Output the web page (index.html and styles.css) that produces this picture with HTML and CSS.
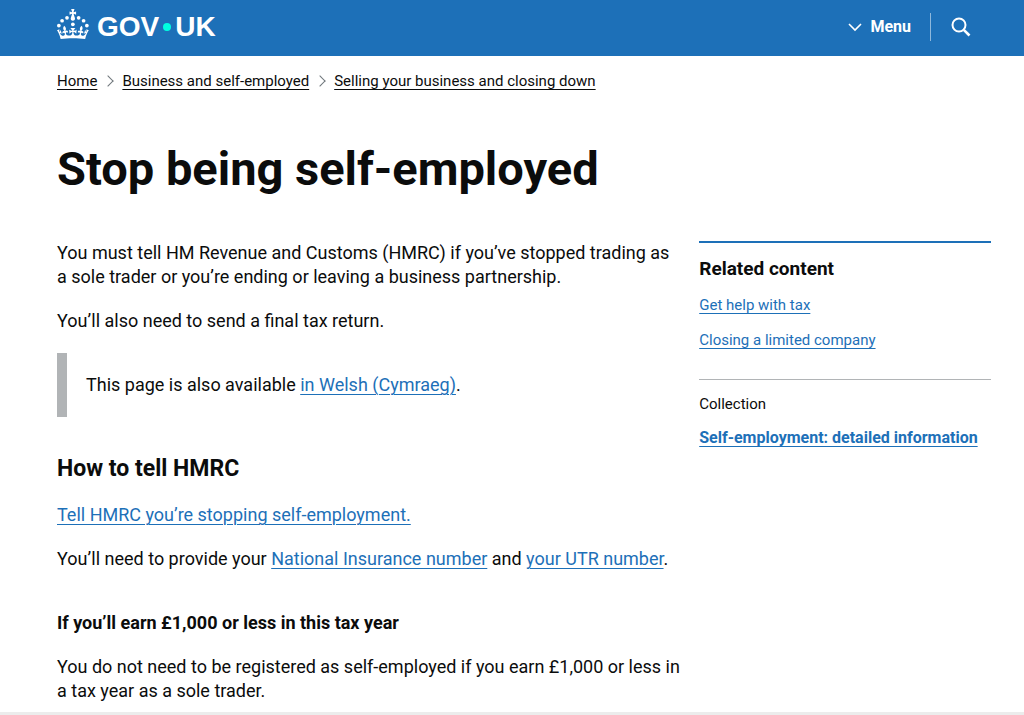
FILE: index.html
```
<!DOCTYPE html>
<html lang="en">
<head>
  <meta charset="UTF-8" />
  <meta name="viewport" content="width=device-width, initial-scale=1.0" />
  <title>Stop being self-employed - GOV.UK</title>
  <link rel="stylesheet" href="styles.css">
</head>
<body>

  <header class="header">
    <div class="container header-row">
      <a class="logo" href="#" aria-label="GOV.UK">
        <svg class="crown" viewBox="0 0 64 60" width="32" height="30" fill="currentColor" aria-hidden="true">
          <circle cx="20" cy="17.6" r="3.7"/>
          <circle cx="10.2" cy="23.5" r="3.7"/>
          <circle cx="3.7" cy="33.2" r="3.7"/>
          <circle cx="31.7" cy="30.6" r="3.7"/>
          <circle cx="43.3" cy="17.6" r="3.7"/>
          <circle cx="53.2" cy="23.5" r="3.7"/>
          <circle cx="59.7" cy="33.2" r="3.7"/>
          <path d="M33.1,9.8c.2-.1.3-.3.5-.5l4.6,2.4v-6.8l-4.6,1.5c-.1-.2-.3-.3-.5-.5l1.9-5.9h-6.7l1.9,5.9c-.2.1-.3.3-.5.5l-4.6-1.5v6.8l4.6-2.4c.1.2.3.3.5.5l-2.6,8c-.9,2.8,1.2,5.7,4.1,5.7h0c3,0,5.1-2.9,4.1-5.7l-2.6-8ZM37,37.9s-3.4,3.8-4.1,6.1c2.2,0,4.2-.5,6.4-2.8l-.7,8.5c-2-2.8-4.4-4.1-5.7-3.8.1,3.1.5,6.7,5.8,7.2,3.7.3,6.7-1.5,7-3.8.4-2.6-2-4.3-3.7-1.6-1.4-4.5,2.4-6.1,4.9-3.2-1.9-4.5-1.8-7.7,2.4-10.9,3,4,2.6,7.3-1.2,11.1,2.4-1.3,6.2,0,4,4.6-1.2-2.8-3.7-2.2-4.2.2-.3,1.7.7,3.7,3,4.2,1.9.3,4.7-.9,7-5.9-1.3,0-2.4.7-3.9,1.7l2.4-8c.6,2.3,1.4,3.7,2.2,4.5.6-1.6.5-2.8,0-5.3l5,1.8c-2.6,3.6-5.2,8.7-7.3,17.5-7.4-1.1-15.7-1.7-24.5-1.7h0c-8.8,0-17.1.6-24.5,1.7-2.1-8.9-4.7-13.9-7.3-17.5l5-1.8c-.5,2.5-.6,3.7,0,5.3.8-.8,1.6-2.3,2.2-4.5l2.4,8c-1.5-1-2.6-1.7-3.9-1.7,2.3,5,5.2,6.2,7,5.9,2.3-.4,3.3-2.4,3-4.2-.5-2.4-3-3.1-4.2-.2-2.2-4.6,1.6-6,4-4.6-3.7-3.7-4.2-7.1-1.2-11.1,4.2,3.2,4.3,6.4,2.4,10.9,2.5-2.8,6.3-1.3,4.9,3.2-1.8-2.7-4.1-1-3.7,1.6.3,2.3,3.3,4.1,7,3.8,5.4-.5,5.7-4.2,5.8-7.2-1.3-.2-3.7,1-5.7,3.8l-.7-8.5c2.2,2.3,4.2,2.7,6.4,2.8-.7-2.3-4.1-6.1-4.1-6.1h10.6Z"/>
        </svg>
        <span class="logo-text">GOV<span class="logo-dot"></span>UK</span>
      </a>
      <div class="header-actions">
        <button class="menu-button" type="button">
          <svg width="14" height="9" viewBox="0 0 14 9" fill="none" stroke="currentColor" stroke-width="1.6" aria-hidden="true">
            <path d="M1 1l6 6 6-6"/>
          </svg>
          Menu
        </button>
        <button class="search-button" type="button" aria-label="Search GOV.UK">
          <svg width="20" height="20" viewBox="0 0 20 20" fill="none" stroke="currentColor" aria-hidden="true">
            <circle cx="8" cy="8" r="6.5" stroke-width="2"/>
            <path d="M12.8 12.8l5.7 5.7" stroke-width="2.6"/>
          </svg>
        </button>
      </div>
    </div>
  </header>

  <div class="container page">
    <nav aria-label="Breadcrumb">
      <ol class="breadcrumbs">
        <li><a href="#">Home</a></li>
        <li><a href="#">Business and self-employed</a></li>
        <li><a href="#">Selling your business and closing down</a></li>
      </ol>
    </nav>

    <h1>Stop being self-employed</h1>

    <div class="columns">
      <main class="content">
        <p>You must tell HM Revenue and Customs (HMRC) if you’ve stopped trading as a sole trader or you’re ending or leaving a business partnership.</p>
        <p>You’ll also need to send a final tax return.</p>
        <div class="inset">
          <p>This page is also available <a href="#">in Welsh (Cymraeg)</a>.</p>
        </div>
        <h2>How to tell HMRC</h2>
        <p><a href="#">Tell HMRC you’re stopping self-employment.</a></p>
        <p>You’ll need to provide your <a href="#">National Insurance number</a> and <a href="#">your UTR number</a>.</p>
        <h3>If you’ll earn £1,000 or less in this tax year</h3>
        <p>You do not need to be registered as self-employed if you earn £1,000 or less in a tax year as a sole trader.</p>
      </main>

      <aside class="related">
        <h2>Related content</h2>
        <ul>
          <li><a href="#">Get help with tax</a></li>
          <li><a href="#">Closing a limited company</a></li>
        </ul>
        <div class="collection">
          <h3>Collection</h3>
          <a href="#">Self-employment: detailed information</a>
        </div>
      </aside>
    </div>
  </div>

  <div class="bottom-bar"></div>

</body>
</html>
```
FILE: styles.css
```
* {
  box-sizing: border-box;
}

body {
  margin: 0;
  height: 100vh;
  overflow: hidden;
  font-family: Roboto, "Liberation Sans", sans-serif;
  font-size: 18px;
  line-height: 24px;
  color: #0b0c0c;
  background: #fff;
}

a {
  color: #1d70b8;
  text-decoration: underline;
  text-decoration-thickness: 1px;
  text-underline-offset: 3px;
}

h1, h2, h3, p, ul, ol {
  margin: 0;
  padding: 0;
}

.container {
  padding: 0 33px 0 57px;
}

.header {
  background: #1d70b8;
  color: #fff;
}

.header-row {
  display: flex;
  justify-content: space-between;
  align-items: center;
  height: 56px;
  padding-bottom: 2px;
}

.logo {
  display: flex;
  align-items: center;
  gap: 8px;
  color: #fff;
  text-decoration: none;
}

.crown {
  margin-bottom: 6px;
}

.logo-text {
  display: flex;
  align-items: center;
  font: bold 28px/32px "Liberation Sans", sans-serif;
}

.logo-dot {
  width: 8px;
  height: 8px;
  margin: 0 4px;
  border-radius: 50%;
  background: #00ffe0;
}

.header-actions {
  display: flex;
  align-items: center;
}

button {
  display: flex;
  align-items: center;
  border: none;
  padding: 0;
  background: none;
  color: #fff;
  font: inherit;
  cursor: pointer;
}

.menu-button {
  gap: 8px;
  padding-right: 19px;
  font-size: 16px;
  font-weight: bold;
}

.search-button {
  height: 28px;
  padding: 0 20px;
  border-left: 1px solid #8eb8dc;
}

.breadcrumbs {
  display: flex;
  padding-top: 15px;
  font-size: 15px;
  line-height: 20px;
  list-style: none;
}

.breadcrumbs a {
  color: #0b0c0c;
}

.breadcrumbs li + li::before {
  content: "";
  display: inline-block;
  width: 7px;
  height: 7px;
  margin: 0 10px 1px 7px;
  border: solid #6f777b;
  border-width: 1px 1px 0 0;
  transform: rotate(45deg);
}

h1 {
  margin: 50px 0 44px;
  font-size: 47px;
  line-height: 56px;
}

.columns {
  display: grid;
  grid-template-columns: 15fr 7fr;
  gap: 17px;
}

.content p {
  margin-bottom: 20px;
}

.content h2 {
  margin: 38px 0 20px;
  font-size: 23px;
  line-height: 28px;
}

.content h3 {
  margin: 40px 0 20px;
  font-size: 18px;
}

.inset {
  padding: 20px 19px;
  border-left: 10px solid #b1b4b6;
}

.content .inset p {
  margin: 0;
}

.related {
  border-top: 2px solid #1d70b8;
  padding-top: 14px;
  font-size: 15px;
  line-height: 20px;
}

.related h2 {
  margin-bottom: 14px;
  font-size: 19px;
  line-height: 24px;
}

.related ul {
  list-style: none;
}

.related li {
  margin-bottom: 15px;
}

.collection {
  margin-top: 29px;
  padding-top: 14px;
  border-top: 1px solid #b1b4b6;
}

.collection h3 {
  margin-bottom: 14px;
  font-size: 15px;
  font-weight: normal;
}

.collection a {
  font-size: 16px;
  font-weight: bold;
}

.bottom-bar {
  position: fixed;
  bottom: 0;
  left: 0;
  right: 0;
  height: 3px;
  background: #ececec;
}
```
